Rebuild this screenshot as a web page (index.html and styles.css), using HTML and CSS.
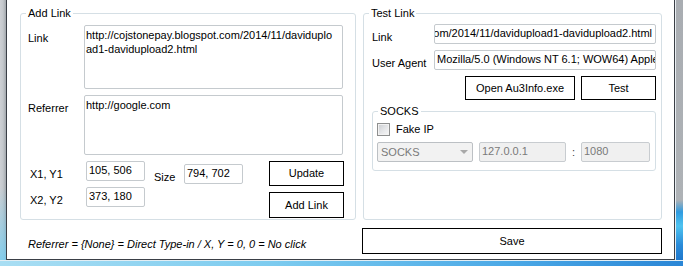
FILE: index.html
```html
<!DOCTYPE html>
<html>
<head>
<meta charset="utf-8">
<link rel="stylesheet" href="styles.css">
</head>
<body>
<div class="frame">
  <div class="edge-left"></div>
  <div class="client">
    <div class="col col-left">
      <fieldset class="group">
        <legend>Add Link</legend>
        <div class="inner-add">
          <div class="row row-link">
            <span class="lbl">Link</span>
            <div class="box area area-link">http://cojstonepay.blogspot.com/2014/11/daviduplo<br>ad1-davidupload2.html</div>
          </div>
          <div class="row row-ref">
            <span class="lbl">Referrer</span>
            <div class="box area area-ref">http://google.com</div>
          </div>
          <div class="coords">
            <div class="coord-col">
              <div class="coord-row"><span class="lbl lbl-xy">X1, Y1</span><div class="box field">105, 506</div></div>
              <div class="coord-row"><span class="lbl lbl-xy">X2, Y2</span><div class="box field">373, 180</div></div>
            </div>
            <div class="size"><span class="lbl lbl-size">Size</span><div class="box field">794, 702</div></div>
            <div class="btn-col">
              <div class="btn btn-update">Update</div>
              <div class="btn btn-add">Add Link</div>
            </div>
          </div>
        </div>
      </fieldset>
      <p class="note">Referrer = {None} = Direct Type-in / X, Y = 0, 0 = No click</p>
    </div>
    <div class="col col-right">
      <fieldset class="group group-test">
        <legend>Test Link</legend>
        <div class="inner-test">
          <div class="t-row t-row-first">
            <span class="lbl t-lbl">Link</span>
            <div class="box t-input t-input-end"><span>om/2014/11/davidupload1-davidupload2.html</span></div>
          </div>
          <div class="t-row">
            <span class="lbl t-lbl">User Agent</span>
            <div class="box t-input">Mozilla/5.0 (Windows NT 6.1; WOW64) AppleWebKit</div>
          </div>
          <div class="t-buttons">
            <div class="btn btn-open">Open Au3Info.exe</div>
            <div class="btn btn-test">Test</div>
          </div>
          <fieldset class="group socks">
            <legend>SOCKS</legend>
            <div class="socks-inner">
              <div class="check-row">
                <span class="checkbox"></span>
                <span>Fake IP</span>
              </div>
              <div class="socks-row">
                <div class="combo"><span>SOCKS</span><span class="arrow"></span></div>
                <div class="box dis ip">127.0.0.1</div>
                <span class="colon">:</span>
                <div class="box dis port">1080</div>
              </div>
            </div>
          </fieldset>
        </div>
      </fieldset>
      <div class="btn btn-save">Save</div>
    </div>
  </div>
  <div class="edge-right"></div>
  <div class="edge-bottom"></div>
</div>
</body>
</html>
```

FILE: styles.css
```css
* {
  box-sizing: border-box;
}

body {
  margin: 0;
  font-family: "Liberation Sans", Arial, sans-serif;
  font-size: 11px;
  line-height: 13px;
  color: #000;
  background: #fff;
}

.frame {
  display: grid;
  grid-template-columns: 6px 669px 8px;
  grid-template-rows: 260px 6px;
  width: 683px;
  height: 266px;
  overflow: hidden;
}

.edge-left {
  grid-column: 1;
  grid-row: 1;
  background:
    linear-gradient(to bottom, rgba(120, 205, 240, 0) 72%, rgba(120, 205, 240, 0.85) 100%),
    linear-gradient(to right, #cdd0d4 0%, #c4c8cc 50%, #a3a8ad 100%);
}

.client {
  grid-column: 2;
  grid-row: 1;
  display: flex;
  gap: 6px;
  padding-left: 13px;
  background: #fff;
  border-left: 1px solid #3a3f46;
  border-right: 1px solid #3a3f46;
  border-bottom: 1px solid #3a3f46;
}

.edge-right {
  grid-column: 3;
  grid-row: 1;
  border-left: 1px solid #e9eef2;
  background: linear-gradient(to bottom, #a9adb2 0px, #aeb2b6 200px, #2f9be0 212px, #4ec3f0 226px, #2a8bd9 245px, #1f78cc 260px);
}

.edge-bottom {
  grid-column: 1 / 4;
  grid-row: 2;
  border-top: 1px solid #e3eef4;
  background: linear-gradient(to right, #a9def3 0%, #7ccbef 40%, #4aa8e6 75%, #2a86d6 100%);
}

.col {
  display: flex;
  flex-direction: column;
}

.col-left {
  width: 336px;
}

.col-right {
  width: 300px;
}

.group {
  margin: 7px 0 0;
  padding: 0;
  min-width: 0;
  height: 213px;
  border: 1px solid #d5dfe5;
  border-radius: 3px;
}

.group legend {
  margin-left: 5px;
  padding: 0 2px;
  line-height: 13px;
}

.group-test {
  margin-left: 1px;
}

.inner-add {
  padding: 0 0 0 7px;
}

.row {
  display: flex;
}

.row-link {
  margin-top: 5px;
}

.row-ref {
  margin-top: 6px;
}

.lbl {
  flex: none;
  width: 56px;
  padding-top: 7px;
  white-space: nowrap;
}

.box {
  border: 1px solid #c5cace;
  border-radius: 2px;
  background: #fff;
  white-space: nowrap;
  overflow: hidden;
}

.area {
  width: 259px;
  padding: 2px 1px;
  line-height: 14px;
}

.area-link {
  height: 64px;
}

.area-ref {
  height: 60px;
}

.coords {
  display: flex;
  margin-top: 6px;
  padding-left: 2px;
}

.coord-col {
  display: flex;
  flex-direction: column;
  gap: 6px;
}

.coord-row {
  display: flex;
}

.field {
  width: 59px;
  height: 20px;
  padding: 2px 2px 0;
}

.size {
  display: flex;
  margin-top: 3px;
  margin-left: 9px;
  align-self: flex-start;
}

.lbl-size {
  width: 30px;
}

.btn-col {
  display: flex;
  flex-direction: column;
  gap: 6px;
  margin-left: 26px;
}

.btn {
  display: flex;
  align-items: center;
  justify-content: center;
  border: 1px solid #000;
  background: #fff;
  white-space: nowrap;
}

.btn-update {
  width: 75px;
  height: 25px;
}

.btn-add {
  width: 75px;
  height: 26px;
}

.note {
  margin: 18px 0 0;
  padding-left: 8px;
  font-style: italic;
  white-space: nowrap;
}

.inner-test {
  padding: 0 5px 0 8px;
}

.t-row {
  display: flex;
  margin-top: 6px;
}

.t-row-first {
  margin-top: 4px;
}

.t-lbl {
  width: 62px;
}

.t-input {
  flex: 1;
  height: 20px;
  padding: 2px 2px 0;
}

.t-input-end {
  display: flex;
  justify-content: flex-end;
  padding-right: 3px;
}

.t-input-end span {
  flex: none;
}

.t-buttons {
  display: flex;
  justify-content: flex-end;
  gap: 6px;
  margin-top: 6px;
}

.btn-open {
  width: 110px;
  height: 24px;
}

.btn-test {
  width: 75px;
  height: 24px;
}

.socks {
  margin-top: 5px;
  height: auto;
}

.socks-inner {
  padding: 5px 0 8px 4px;
}

.check-row {
  display: flex;
  align-items: center;
  gap: 6px;
  height: 13px;
}

.checkbox {
  flex: none;
  width: 13px;
  height: 13px;
  border: 1px solid #8e8f8f;
  background: linear-gradient(135deg, #c9ccd0 0%, #e6e7e9 55%, #f7f7f7 100%);
  box-shadow: inset 0 0 0 1px #f2f2f2;
}

.socks-row {
  display: flex;
  align-items: center;
  margin-top: 6px;
}

.combo {
  display: flex;
  align-items: center;
  justify-content: space-between;
  width: 96px;
  height: 20px;
  padding: 0 4px 0 3px;
  border: 1px solid #bcc0c4;
  border-radius: 2px;
  background: #f2f2f2;
  color: #7a7a7a;
}

.arrow {
  width: 0;
  height: 0;
  border-left: 4px solid transparent;
  border-right: 4px solid transparent;
  border-top: 4px solid #a9a9a9;
}

.dis {
  height: 20px;
  padding: 2px 2px 0;
  background: #f0f0f0;
  border-color: #c8ccd0;
  color: #7a7a7a;
}

.ip {
  width: 87px;
  margin-left: 6px;
}

.colon {
  width: 15px;
  text-align: center;
  color: #444;
}

.port {
  width: 69px;
}

.btn-save {
  width: 300px;
  height: 26px;
  margin-top: 8px;
}
```
